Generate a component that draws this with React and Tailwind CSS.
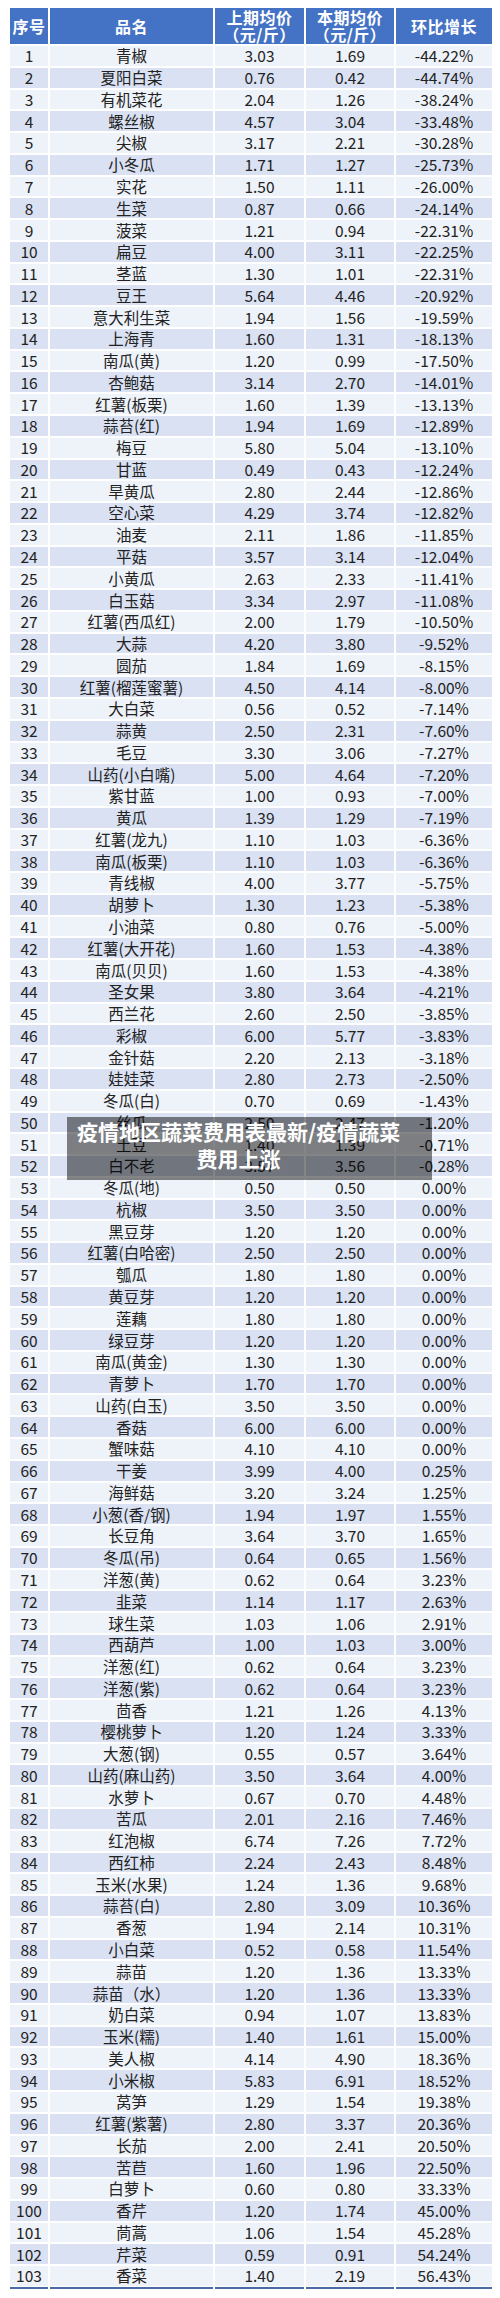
const rows = `1|青椒|3.03|1.69|-44.22%
2|夏阳白菜|0.76|0.42|-44.74%
3|有机菜花|2.04|1.26|-38.24%
4|螺丝椒|4.57|3.04|-33.48%
5|尖椒|3.17|2.21|-30.28%
6|小冬瓜|1.71|1.27|-25.73%
7|实花|1.50|1.11|-26.00%
8|生菜|0.87|0.66|-24.14%
9|菠菜|1.21|0.94|-22.31%
10|扁豆|4.00|3.11|-22.25%
11|茎蓝|1.30|1.01|-22.31%
12|豆王|5.64|4.46|-20.92%
13|意大利生菜|1.94|1.56|-19.59%
14|上海青|1.60|1.31|-18.13%
15|南瓜(黄)|1.20|0.99|-17.50%
16|杏鲍菇|3.14|2.70|-14.01%
17|红薯(板栗)|1.60|1.39|-13.13%
18|蒜苔(红)|1.94|1.69|-12.89%
19|梅豆|5.80|5.04|-13.10%
20|甘蓝|0.49|0.43|-12.24%
21|旱黄瓜|2.80|2.44|-12.86%
22|空心菜|4.29|3.74|-12.82%
23|油麦|2.11|1.86|-11.85%
24|平菇|3.57|3.14|-12.04%
25|小黄瓜|2.63|2.33|-11.41%
26|白玉菇|3.34|2.97|-11.08%
27|红薯(西瓜红)|2.00|1.79|-10.50%
28|大蒜|4.20|3.80|-9.52%
29|圆茄|1.84|1.69|-8.15%
30|红薯(榴莲蜜薯)|4.50|4.14|-8.00%
31|大白菜|0.56|0.52|-7.14%
32|蒜黄|2.50|2.31|-7.60%
33|毛豆|3.30|3.06|-7.27%
34|山药(小白嘴)|5.00|4.64|-7.20%
35|紫甘蓝|1.00|0.93|-7.00%
36|黄瓜|1.39|1.29|-7.19%
37|红薯(龙九)|1.10|1.03|-6.36%
38|南瓜(板栗)|1.10|1.03|-6.36%
39|青线椒|4.00|3.77|-5.75%
40|胡萝卜|1.30|1.23|-5.38%
41|小油菜|0.80|0.76|-5.00%
42|红薯(大开花)|1.60|1.53|-4.38%
43|南瓜(贝贝)|1.60|1.53|-4.38%
44|圣女果|3.80|3.64|-4.21%
45|西兰花|2.60|2.50|-3.85%
46|彩椒|6.00|5.77|-3.83%
47|金针菇|2.20|2.13|-3.18%
48|娃娃菜|2.80|2.73|-2.50%
49|冬瓜(白)|0.70|0.69|-1.43%
50|丝瓜|2.50|2.47|-1.20%
51|土豆|1.40|1.39|-0.71%
52|白不老|3.57|3.56|-0.28%
53|冬瓜(地)|0.50|0.50|0.00%
54|杭椒|3.50|3.50|0.00%
55|黑豆芽|1.20|1.20|0.00%
56|红薯(白哈密)|2.50|2.50|0.00%
57|瓠瓜|1.80|1.80|0.00%
58|黄豆芽|1.20|1.20|0.00%
59|莲藕|1.80|1.80|0.00%
60|绿豆芽|1.20|1.20|0.00%
61|南瓜(黄金)|1.30|1.30|0.00%
62|青萝卜|1.70|1.70|0.00%
63|山药(白玉)|3.50|3.50|0.00%
64|香菇|6.00|6.00|0.00%
65|蟹味菇|4.10|4.10|0.00%
66|干姜|3.99|4.00|0.25%
67|海鲜菇|3.20|3.24|1.25%
68|小葱(香/钢)|1.94|1.97|1.55%
69|长豆角|3.64|3.70|1.65%
70|冬瓜(吊)|0.64|0.65|1.56%
71|洋葱(黄)|0.62|0.64|3.23%
72|韭菜|1.14|1.17|2.63%
73|球生菜|1.03|1.06|2.91%
74|西葫芦|1.00|1.03|3.00%
75|洋葱(红)|0.62|0.64|3.23%
76|洋葱(紫)|0.62|0.64|3.23%
77|茴香|1.21|1.26|4.13%
78|樱桃萝卜|1.20|1.24|3.33%
79|大葱(钢)|0.55|0.57|3.64%
80|山药(麻山药)|3.50|3.64|4.00%
81|水萝卜|0.67|0.70|4.48%
82|苦瓜|2.01|2.16|7.46%
83|红泡椒|6.74|7.26|7.72%
84|西红柿|2.24|2.43|8.48%
85|玉米(水果)|1.24|1.36|9.68%
86|蒜苔(白)|2.80|3.09|10.36%
87|香葱|1.94|2.14|10.31%
88|小白菜|0.52|0.58|11.54%
89|蒜苗|1.20|1.36|13.33%
90|蒜苗（水）|1.20|1.36|13.33%
91|奶白菜|0.94|1.07|13.83%
92|玉米(糯)|1.40|1.61|15.00%
93|美人椒|4.14|4.90|18.36%
94|小米椒|5.83|6.91|18.52%
95|莴笋|1.29|1.54|19.38%
96|红薯(紫薯)|2.80|3.37|20.36%
97|长茄|2.00|2.41|20.50%
98|苦苣|1.60|1.96|22.50%
99|白萝卜|0.60|0.80|33.33%
100|香芹|1.20|1.74|45.00%
101|茼蒿|1.06|1.54|45.28%
102|芹菜|0.59|0.91|54.24%
103|香菜|1.40|2.19|56.43%`
  .split('\n')
  .map((line) => line.split('|'))

function HeadCell({ children }) {
  return (
    <div className="flex flex-col items-center justify-center bg-[#4472c4] text-white text-[16px] font-bold leading-[17px] tracking-[0.5px] text-center">
      {children}
    </div>
  )
}

function Row({ cells, index, last }) {
  const bg = index % 2 === 0 ? 'bg-[#eef2f9]' : 'bg-[#d9e1f2]'
  const edge = last ? 'shadow-[0_1px_0_#ffffff,0_3px_0_#4a6ca6]' : ''
  return cells.map((c, i) => (
    <div
      key={i}
      className={`flex items-center justify-center whitespace-nowrap text-[15.5px] leading-[19px] text-[#222222] ${bg} ${edge}`}
    >
      {c}
    </div>
  ))
}

export default function App() {
  return (
    <div className="relative w-[500px] h-[2298px] bg-white font-['Noto_Sans_CJK_SC',sans-serif]">
      <div className="pt-[8px] pl-[10px]">
        <div className="grid w-fit grid-cols-[38px_163px_89px_88px_96px] grid-rows-[36px] auto-rows-[19.78px] gap-[2px]">
          <HeadCell>序号</HeadCell>
          <HeadCell>品名</HeadCell>
          <HeadCell>
            <span>上期均价</span>
            <span>（元/斤）</span>
          </HeadCell>
          <HeadCell>
            <span>本期均价</span>
            <span>（元/斤）</span>
          </HeadCell>
          <HeadCell>环比增长</HeadCell>
          {rows.map((r, idx) => (
            <Row key={r[0]} cells={r} index={idx} last={idx === rows.length - 1} />
          ))}
        </div>
      </div>

      <div className="absolute left-[67px] top-[1117px] w-[365px] h-[63px] bg-[rgba(0,0,0,0.48)] pl-[10px] pr-[32px] pt-[1px] text-center text-white font-bold text-[21px] leading-[27px] whitespace-nowrap">
        疫情地区蔬菜费用表最新/疫情蔬菜
        <br />
        费用上涨
      </div>
    </div>
  )
}
